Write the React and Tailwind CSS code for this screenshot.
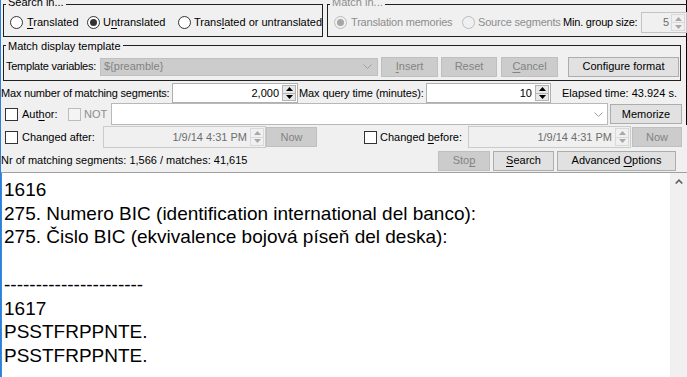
import React from "react";

const Up = ({ c = "#000000" }) => (
  <svg width="7" height="4" viewBox="0 0 7 4"><polygon points="0,4 3.5,0 7,4" fill={c} /></svg>
);
const Down = ({ c = "#000000" }) => (
  <svg width="7" height="4" viewBox="0 0 7 4"><polygon points="0,0 7,0 3.5,4" fill={c} /></svg>
);
const Chevron = ({ c = "#a0a0a0" }) => (
  <svg width="9" height="5" viewBox="0 0 9 5"><polyline points="0.5,0.5 4.5,4.5 8.5,0.5" fill="none" stroke={c} strokeWidth="1" /></svg>
);

function Radio({ checked, disabled }) {
  return (
    <span className={`flex items-center justify-center w-[13px] h-[13px] rounded-full border shrink-0 ${disabled ? "border-[#bcbcbc] bg-[#f0f0f0]" : "border-[#333333] bg-white"}`}>
      {checked && <span className={`w-[7px] h-[7px] rounded-full ${disabled ? "bg-[#a6a6a6]" : "bg-[#333333]"}`} />}
    </span>
  );
}

function Check({ disabled }) {
  return <span className={`block w-[13px] h-[13px] border shrink-0 ${disabled ? "border-[#bcbcbc] bg-[#f4f4f4]" : "border-[#333333] bg-white"}`} />;
}

function Btn({ children, disabled, className = "" }) {
  return (
    <div className={`flex items-center justify-center h-[20px] border shrink-0 whitespace-nowrap ${disabled ? "bg-[#cccccc] border-[#bfbfbf] text-[#838383]" : "bg-[#e1e1e1] border-[#adadad] text-black"} ${className}`}>
      {children}
    </div>
  );
}

function SpinBtns({ disabled }) {
  const cls = disabled ? "bg-[#f0f0f0] border-[#d9d9d9]" : "bg-[#e8e8e8] border-[#b4b4b4]";
  const c = disabled ? "#a8a8a8" : "#000000";
  return (
    <div className="w-[14px] flex flex-col shrink-0 self-stretch py-[1px] mr-[1px]">
      <div className={`flex-1 flex items-center justify-center border ${cls}`}><Up c={c} /></div>
      <div className={`flex-1 flex items-center justify-center border border-t-0 ${cls}`}><Down c={c} /></div>
    </div>
  );
}

function SpinField({ value, className = "", disabled }) {
  return (
    <div className={`flex shrink-0 border ${disabled ? "bg-[#f0f0f0] border-[#cbcbcb] text-[#6d6d6d]" : "bg-white border-[#b0b0b0] text-black"} ${className}`}>
      <div className="flex-1 flex items-center justify-end pr-[3px] whitespace-nowrap">{value}</div>
      <SpinBtns disabled={disabled} />
    </div>
  );
}

function U({ children }) {
  return <span className="underline underline-offset-[2px]">{children}</span>;
}

export default function App() {
  return (
    <div className="w-[687px] h-[377px] overflow-hidden flex flex-col bg-[#f0f0f0] border-l border-[#2e7fd8] text-black text-[11px] leading-[13px] font-['Liberation_Sans',Arial,sans-serif]">
      {/* rows 1-4 with right edge line */}
      <div className="flex flex-col border-r border-black shrink-0">
        {/* Row 1 */}
        <div className="flex h-[33px] mt-[4px]">
          <div className="relative ml-[2px] w-[331px] h-[33px] border border-[#202020] flex items-center pt-[4px]">
            <span className="absolute -top-[9px] left-[2px] px-[2px] bg-[#f0f0f0] leading-[12px] whitespace-nowrap">Search in...</span>
            <div className="flex items-center gap-[4px] w-[77px] ml-[6px]">
              <Radio />
              <span className="whitespace-nowrap"><U>T</U>ranslated</span>
            </div>
            <div className="flex items-center gap-[3px] w-[91px]">
              <Radio checked />
              <span className="whitespace-nowrap">U<U>n</U>translated</span>
            </div>
            <div className="flex items-center gap-[3px]">
              <Radio />
              <span className="whitespace-nowrap">Trans<U>l</U>ated or untranslated</span>
            </div>
          </div>
          <div className="relative ml-[4px] flex-1 h-[33px] border border-r-0 border-[#202020]">
            <span className="absolute -top-[9px] left-[2px] px-[2px] bg-[#f0f0f0] leading-[12px] text-[#8d8d8d] whitespace-nowrap">Match in...</span>
            <div className="flex items-center h-full pt-[4px] overflow-hidden tracking-[-0.2px]">
              <div className="flex items-center gap-[4px] w-[128px] ml-[6px] shrink-0">
                <Radio checked disabled />
                <span className="whitespace-nowrap text-[#8d8d8d]">Translation memories</span>
              </div>
              <div className="flex items-center gap-[3px] w-[101px] shrink-0">
                <Radio disabled />
                <span className="whitespace-nowrap text-[#8d8d8d]">Source segments</span>
              </div>
              <span className="w-[78px] shrink-0 whitespace-nowrap">Min. group size:</span>
              <div className="flex w-[46px] h-[21px] shrink-0 border border-[#c4c4c4] bg-[#f0f0f0] text-[#6d6d6d]">
                <div className="w-[29px] flex items-center justify-end pr-[2px]">5</div>
                <SpinBtns disabled />
              </div>
            </div>
          </div>
        </div>

        {/* Row 2 */}
        <div className="relative mt-[8px] ml-[2px] w-[678px] h-[36px] border border-[#202020] flex items-center pt-[7px]">
          <span className="absolute -top-[6px] left-[2px] px-[2px] bg-[#f0f0f0] leading-[12px] whitespace-nowrap">Match display template</span>
          <span className="ml-[2px] w-[94px] shrink-0 whitespace-nowrap tracking-[-0.25px]">Template variables:</span>
          <div className="w-[278px] h-[18px] shrink-0 flex items-center justify-between bg-[#cccccc] border border-[#bfbfbf] text-[#838383] pl-[3px]">
            <span>{"${preamble}"}</span>
            <span className="mr-[5px] flex"><Chevron /></span>
          </div>
          <Btn disabled className="ml-[3px] w-[57px]"><span><U>I</U>nsert</span></Btn>
          <Btn disabled className="ml-[3px] w-[56px]">Reset</Btn>
          <Btn disabled className="ml-[4px] w-[57px]"><span><U>C</U>ancel</span></Btn>
          <Btn className="ml-[10px] w-[111px]">Configure format</Btn>
        </div>

        {/* Row 3 */}
        <div className="flex items-center h-[20px] mt-[2px]">
          <span className="w-[171px] shrink-0 whitespace-nowrap tracking-[-0.2px]">Max number of matching segments:</span>
          <SpinField value="2,000" className="w-[126px] h-[20px]" />
          <span className="w-[128px] shrink-0 pl-[1px] whitespace-nowrap tracking-[-0.1px]">Max query time (minutes):</span>
          <SpinField value="10" className="w-[125px] h-[20px]" />
          <span className="ml-[11px] whitespace-nowrap">Elapsed time: 43.924 s.</span>
        </div>

        {/* Row 4 */}
        <div className="flex items-center h-[22px]">
          <div className="flex items-center w-[67px] shrink-0">
            <span className="ml-[4px]"><Check /></span>
            <span className="ml-[4px] whitespace-nowrap">Aut<U>h</U>or:</span>
          </div>
          <div className="flex items-center w-[43px] shrink-0">
            <Check disabled />
            <span className="ml-[3px] text-[#8d8d8d]">NOT</span>
          </div>
          <div className="w-[497px] h-[22px] shrink-0 flex items-center justify-end bg-white border border-[#b8b8b8]">
            <span className="mr-[4px] flex"><Chevron /></span>
          </div>
          <Btn className="ml-[2px] w-[72px]">Memorize</Btn>
        </div>
      </div>

      {/* Row 5 */}
      <div className="flex items-center h-[22px] mt-[1px] shrink-0">
        <div className="flex items-center w-[102px] shrink-0">
          <span className="ml-[4px]"><Check /></span>
          <span className="ml-[4px] whitespace-nowrap">Changed after:</span>
        </div>
        <SpinField disabled value="1/9/14 4:31 PM" className="w-[163px] h-[22px]" />
        <Btn disabled className="w-[51px]">Now</Btn>
        <div className="flex items-center w-[104px] ml-[47px] shrink-0">
          <Check />
          <span className="ml-[3px] whitespace-nowrap">Changed <U>b</U>efore:</span>
        </div>
        <SpinField disabled value="1/9/14 4:31 PM" className="w-[163px] h-[22px]" />
        <Btn disabled className="ml-[1px] w-[50px]">Now</Btn>
      </div>

      {/* Row 6 */}
      <div className="flex items-center h-[21px] mt-[2px] shrink-0">
        <span className="whitespace-nowrap">Nr of matching segments: 1,566 / matches: 41,615</span>
        <Btn disabled className="ml-auto w-[52px]"><span>Sto<U>p</U></span></Btn>
        <Btn className="ml-[3px] w-[61px]"><span><U>S</U>earch</span></Btn>
        <Btn className="ml-[3px] w-[119px] mr-[11px]"><span>Advanced <U>O</U>ptions</span></Btn>
      </div>

      {/* Results pane */}
      <div className="flex flex-1 min-h-0 mt-[1px] border-t border-[#a0a0a0]">
        <div className="flex-1 bg-white border-l border-[#3a8ae0] pl-[2px] pt-[5px] text-[19px] leading-[23.7px] text-black whitespace-pre">
          <div>1616</div>
          <div>275. Numero BIC (identification international del banco):</div>
          <div>275. Čislo BIC (ekvivalence bojová píseň del deska):</div>
          <div>{" "}</div>
          <div>----------------------</div>
          <div>1617</div>
          <div>PSSTFRPPNTE.</div>
          <div>PSSTFRPPNTE.</div>
        </div>
        <div className="w-[17px] shrink-0 bg-[#f0f0f0] flex justify-center pt-[6px]">
          <svg width="8" height="5" viewBox="0 0 8 5">
            <polyline points="0.7,4.5 4,1.2 7.3,4.5" fill="none" stroke="#606060" strokeWidth="1.6" />
          </svg>
        </div>
      </div>
    </div>
  );
}
